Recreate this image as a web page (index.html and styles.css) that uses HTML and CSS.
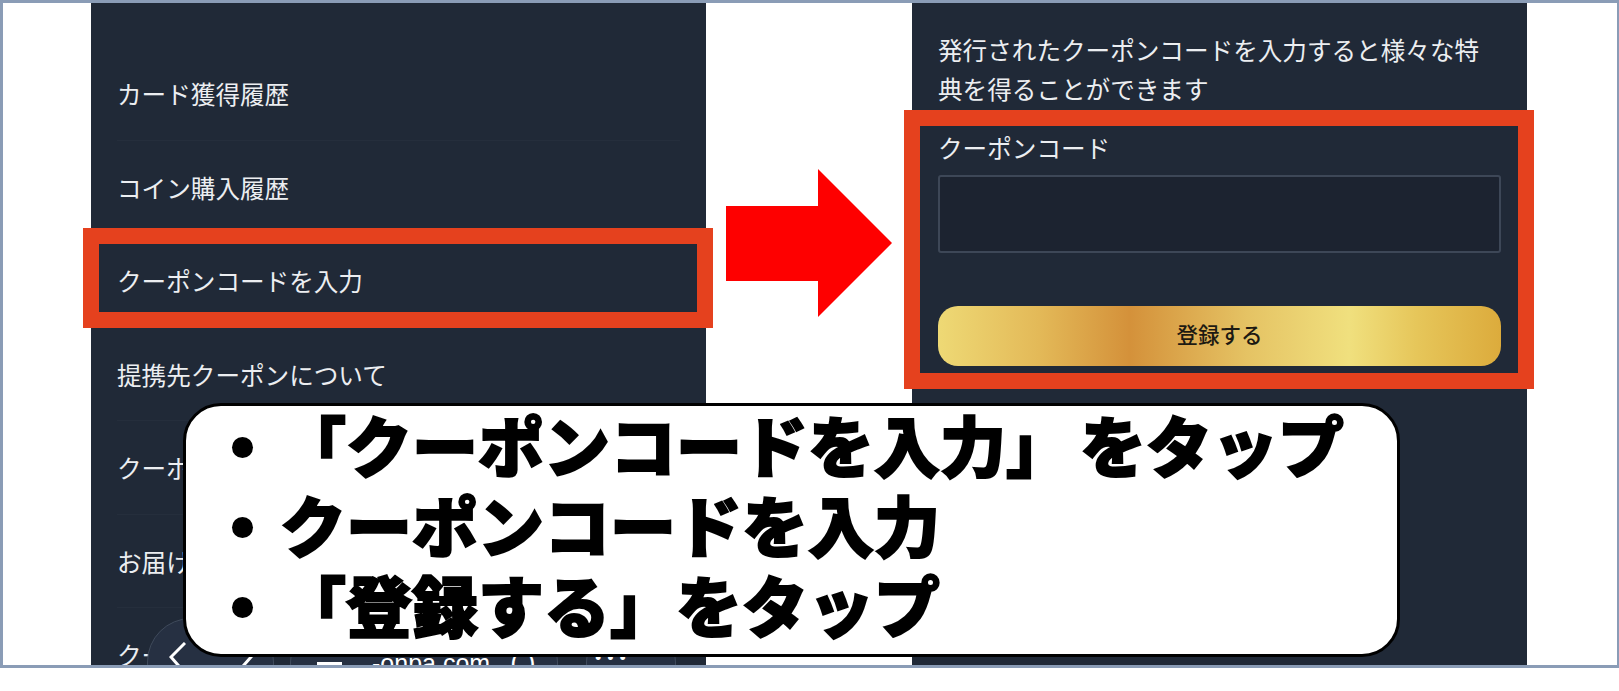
FILE: index.html
```html
<!DOCTYPE html>
<html lang="ja">

<head>
    <meta charset="UTF-8">
    <meta name="viewport" content="width=device-width, initial-scale=1.0">
    <title>クーポンコードの入力方法</title>
    <link rel="stylesheet" href="styles.css">
</head>

<body>
    <div class="slide">
        <!-- 左の画面 -->
        <div class="phone phone-menu">
            <ul class="menu">
                <li>カード獲得履歴</li>
                <li>コイン購入履歴</li>
                <li>クーポンコードを入力</li>
                <li>提携先クーポンについて</li>
                <li>クーポン履歴</li>
                <li>お届け先</li>
                <li>クーポン</li>
            </ul>
            <div class="browser-bar">
                <div class="glass glass-arrows">
                    <svg class="chevron" viewBox="0 0 17 32"><polyline points="16,1 2,15 16,31"></polyline></svg>
                    <svg class="chevron" viewBox="0 0 17 32"><polyline points="1,1 15,15 1,31"></polyline></svg>
                </div>
                <div class="glass glass-url">
                    <span class="burger"></span>
                    <span class="url">-onpa.com</span>
                    <span class="reload">( )</span>
                </div>
                <div class="glass glass-more">•••</div>
            </div>
        </div>

        <!-- 右の画面 -->
        <div class="phone phone-form">
            <p class="lead">発行されたクーポンコードを入力すると様々な特典を得ることができます</p>
            <label class="code-label" for="code">クーポンコード</label>
            <input class="code-input" id="code" type="text">
            <a class="submit" href="javascript:;">登録する</a>
        </div>

        <!-- 赤枠と矢印 -->
        <div class="mark mark-menu"></div>
        <div class="mark mark-form"></div>
        <svg class="arrow" viewBox="0 0 166 148"><polygon points="0,37 92,37 92,0 166,74 92,148 92,112 0,112"></polygon></svg>

        <!-- 説明 -->
        <div class="callout">
            <ul>
                <li><span>「クーポンコードを入力<span class="wide">」</span>をタップ</span></li>
                <li><span>クーポンコードを入力</span></li>
                <li><span>「登録する」をタップ</span></li>
            </ul>
        </div>
    </div>
</body>

</html>
```

FILE: styles.css
```css
* {
    margin: 0;
    padding: 0;
    box-sizing: border-box;
}

body {
    background: #fff;
    font-family: "Noto Sans CJK JP", "Noto Sans", sans-serif;
    overflow: hidden;
}

.slide {
    position: relative;
    display: flex;
    gap: 206px;
    height: 668px;
    padding-left: 88px;
    border: 3px solid #8a9cb6;
    border-right-width: 2px;
}

/* スマホ画面 */

.phone {
    position: relative;
    width: 615px;
    height: 662px;
    background: #202937;
    color: #eceef1;
    font-size: 24.6px;
    overflow: hidden;
}

/* メニュー */

.menu {
    list-style: none;
    padding: 44px 26px 0;
}

.menu li {
    height: 93.5px;
    line-height: 93px;
    border-bottom: 1px solid #252e3c;
}

/* ブラウザのバー */

.browser-bar {
    position: absolute;
    top: 615px;
    left: 56px;
    display: flex;
    gap: 16px;
    color: #fff;
}

.glass {
    height: 90px;
    background: #263042;
    border: 1px solid #3f4a5b;
    border-radius: 44px;
}

.glass-arrows {
    display: flex;
    gap: 50px;
    width: 127px;
    padding: 23px 0 0 21px;
}

.chevron {
    width: 17px;
    height: 32px;
    fill: none;
    stroke: #fff;
    stroke-width: 3;
}

.glass-url {
    display: flex;
    width: 268px;
    padding-left: 26px;
}

.burger {
    width: 25px;
    height: 3px;
    margin-top: 43px;
    background: #fff;
}

.url {
    margin: 29px 0 0 30px;
    font-family: "Liberation Sans", sans-serif;
    font-size: 25px;
    line-height: 30px;
}

.reload {
    margin: 29px 0 0 20px;
    font-family: "Liberation Sans", sans-serif;
    font-size: 27px;
    line-height: 30px;
}

.glass-more {
    width: 90px;
    margin-left: 12px;
    padding-left: 8px;
    font-family: "Liberation Sans", sans-serif;
    font-size: 18px;
    line-height: 78px;
    letter-spacing: 6px;
}

/* クーポン入力 */

.phone-form {
    padding: 27px 26px 0;
}

.lead {
    line-height: 39px;
}

.code-label {
    display: block;
    margin-top: 20px;
    line-height: 39px;
}

.code-input {
    display: block;
    width: 100%;
    height: 78px;
    margin-top: 8px;
    background: #1c2330;
    border: 2px solid #3d4757;
    border-radius: 3px;
}

.submit {
    display: block;
    height: 60px;
    margin-top: 53px;
    background: linear-gradient(90deg, #eed975 0%, #e3b958 18%, #d4913a 34%, #e5c364 55%, #f0e07e 73%, #e6c65a 85%, #dcab3c 100%);
    border-radius: 20px;
    color: #1d1a12;
    font-size: 21.5px;
    font-weight: 500;
    line-height: 55px;
    text-align: center;
    text-decoration: none;
}

/* 赤枠 */

.mark {
    position: absolute;
    border: 16px solid #e5411e;
}

.mark-menu {
    top: 225px;
    left: 80px;
    width: 630px;
    height: 100px;
}

.mark-form {
    top: 107px;
    left: 901px;
    width: 630px;
    height: 279px;
}

.arrow {
    position: absolute;
    top: 166px;
    left: 723px;
    width: 166px;
    height: 148px;
    fill: #fe0000;
}

/* 説明 */

.callout {
    position: absolute;
    top: 400px;
    left: 180px;
    width: 1217px;
    height: 254px;
    background: #fff;
    border: 3.5px solid #000;
    border-radius: 38px;
    color: #000;
    font-size: 66px;
    font-weight: 900;
    line-height: 80px;
    -webkit-text-stroke: 2px #000;
    overflow: hidden;
}

.callout ul {
    list-style: none;
    margin-top: -3px;
    padding-left: 46px;
}

.callout li {
    display: flex;
    gap: 27px;
}

/* 丸印 */

.callout li::before {
    content: "";
    flex: none;
    width: 21px;
    height: 21px;
    margin-top: 33.5px;
    background: #000;
    border-radius: 50%;
}

.wide {
    letter-spacing: 8px;
}
```
